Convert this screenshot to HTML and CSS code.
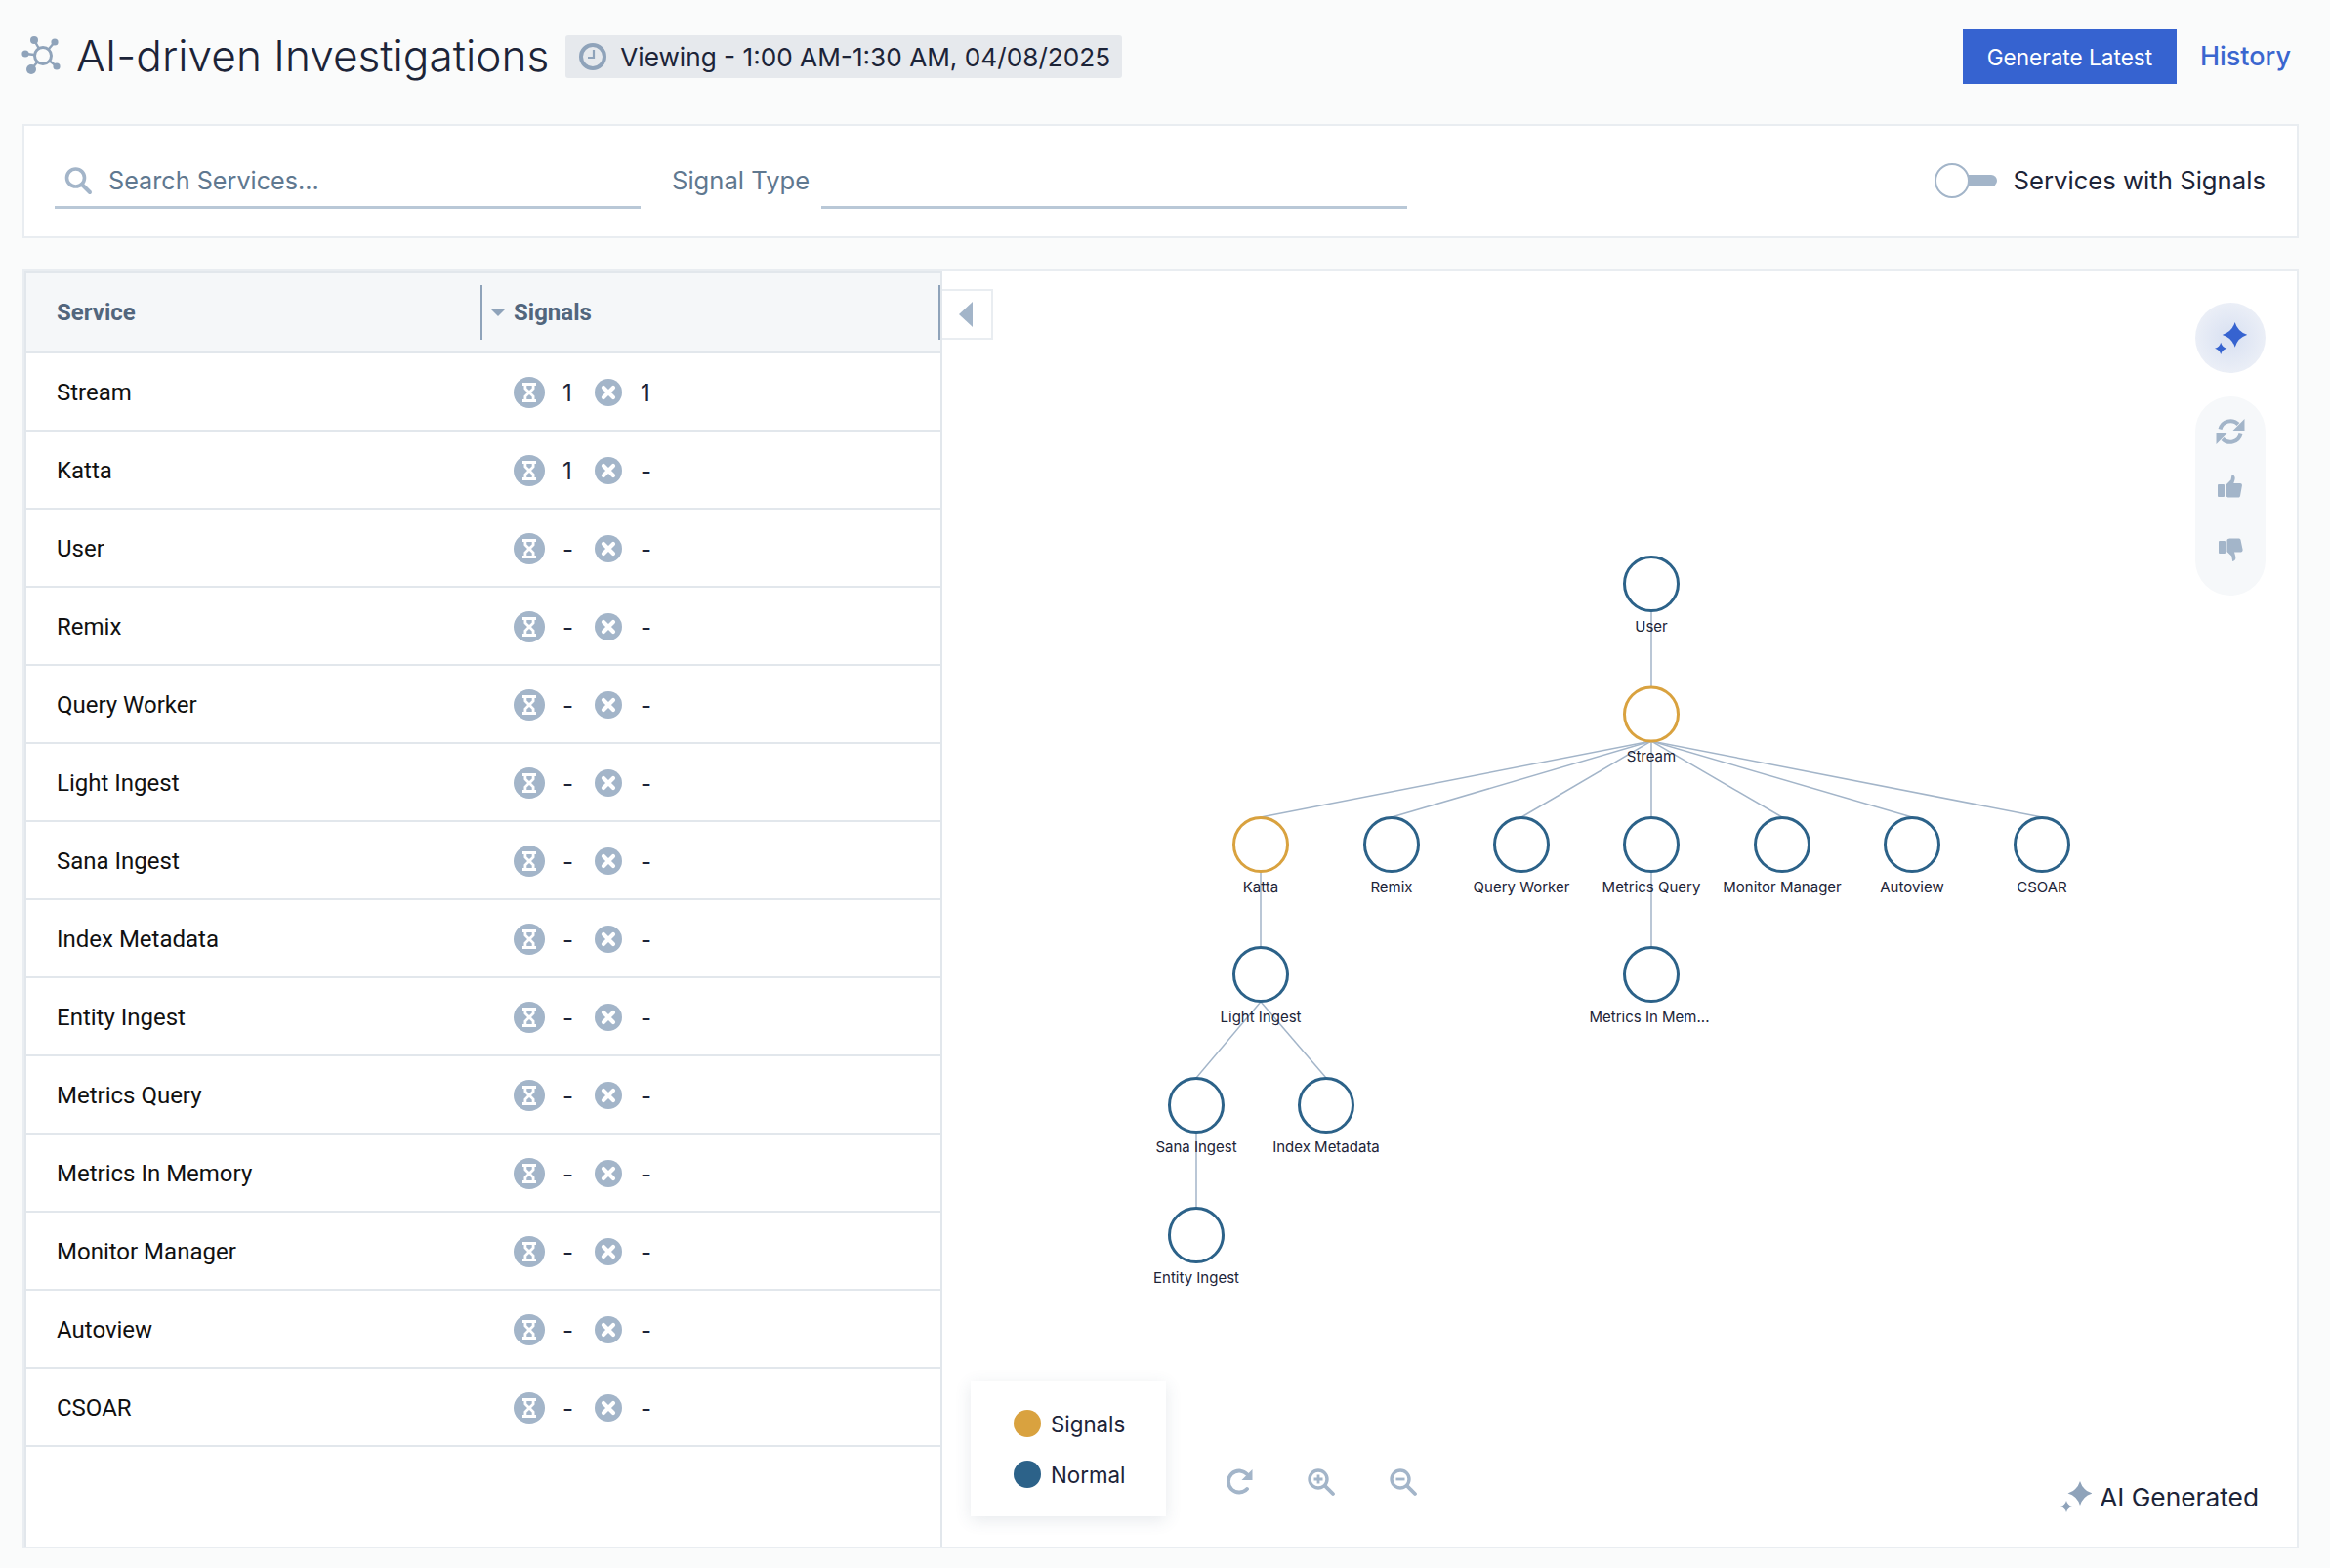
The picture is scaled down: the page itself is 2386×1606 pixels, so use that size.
FILE: index.html
```html
<!DOCTYPE html>
<html lang="en">

<head>
    <meta charset="UTF-8">
    <meta name="viewport" content="width=device-width, initial-scale=1.0">
    <title>AI-driven Investigations</title>
    <link rel="stylesheet" href="styles.css">
</head>

<body>
    <svg class="defs" width="0" height="0">
        <defs>
            <symbol id="i-wait" viewBox="0 0 32 32">
                <circle cx="16" cy="16" r="16" fill="#a3b5c9" />
                <path d="M9 6h14v3h-1.500v3.500L18 16l3.500 3.500V23H23v3H9v-3h1.500v-3.500L14 16l-3.500-3.500V9H9z" fill="#fff" />
                <path d="M13.300 9h5.400v2.400L16 14l-2.700-2.600zM16 18l2.700 2.600V23h-5.400v-2.400z" fill="#a3b5c9" />
            </symbol>
            <symbol id="i-fail" viewBox="0 0 28 28">
                <circle cx="14" cy="14" r="14" fill="#a3b5c9" />
                <path d="M9 9l10 10M19 9L9 19" stroke="#fff" stroke-width="4.200" stroke-linecap="round" />
            </symbol>
            <symbol id="i-spark" viewBox="0 0 32 32">
                <path d="M20 0Q22.800 9.700 32.500 12.500 22.800 15.300 20 25 17.200 15.300 7.500 12.500 17.200 9.700 20 0z" />
                <path d="M6 20Q7.300 24.700 12 26 7.300 27.300 6 32 4.700 27.300 0 26 4.700 24.700 6 20z" />
            </symbol>
        </defs>
    </svg>

    <div class="page">
        <header class="topbar">
            <svg class="logo" viewBox="0 0 40 40" width="40" height="40">
                <g stroke="#8fa3ba" stroke-width="2.400">
                    <path d="M13 4l9 16M34 6L22 20M4 18l18 2M10 34l12-14M36 31L22 20" />
                </g>
                <circle cx="22" cy="20" r="8.500" fill="#fafbfb" stroke="#8fa3ba" stroke-width="3" />
                <g fill="#8fa3ba">
                    <circle cx="13" cy="4" r="4" />
                    <circle cx="34" cy="6" r="3.600" />
                    <circle cx="4" cy="18" r="3.600" />
                    <circle cx="10" cy="34" r="5" />
                    <circle cx="36" cy="31" r="3.600" />
                </g>
            </svg>
            <h1 class="title">AI-driven Investigations</h1>
            <div class="viewing">
                <svg viewBox="0 0 28 28" width="28" height="28">
                    <circle cx="14" cy="14" r="12" fill="none" stroke="#8fa3ba" stroke-width="4" />
                    <path d="M15 7v8H9" fill="none" stroke="#8fa3ba" stroke-width="2.200" />
                </svg>
                <span>Viewing - 1:00 AM-1:30 AM, 04/08/2025</span>
            </div>
            <button class="btn-generate">Generate Latest</button>
            <a class="history">History</a>
        </header>

        <section class="filters">
            <div class="search">
                <svg viewBox="0 0 30 30" width="30" height="30">
                    <circle cx="12.500" cy="12" r="9" fill="none" stroke="#a3b5c9" stroke-width="3.600" />
                    <path d="M19 19l8 8" stroke="#a3b5c9" stroke-width="4" stroke-linecap="round" />
                </svg>
                <span>Search Services...</span>
            </div>
            <div class="signal-type">
                <span class="signal-label">Signal Type</span>
                <div class="signal-input"></div>
            </div>
            <div class="toggle">
                <div class="toggle-track"><div class="toggle-knob"></div></div>
                <span>Services with Signals</span>
            </div>
        </section>

        <main class="main">
            <div class="service-table">
                <div class="row head">
                    <div class="col-service">Service</div>
                    <div class="col-signals"><i class="sort"></i>Signals</div>
                </div>
                <div class="row">
                    <div class="col-service">Stream</div>
                    <div class="col-signals"><svg class="ic-wait"><use href="#i-wait" /></svg><span class="num">1</span><svg class="ic-fail"><use href="#i-fail" /></svg><span class="num">1</span></div>
                </div>
                <div class="row">
                    <div class="col-service">Katta</div>
                    <div class="col-signals"><svg class="ic-wait"><use href="#i-wait" /></svg><span class="num">1</span><svg class="ic-fail"><use href="#i-fail" /></svg><span class="num">-</span></div>
                </div>
                <div class="row">
                    <div class="col-service">User</div>
                    <div class="col-signals"><svg class="ic-wait"><use href="#i-wait" /></svg><span class="num">-</span><svg class="ic-fail"><use href="#i-fail" /></svg><span class="num">-</span></div>
                </div>
                <div class="row">
                    <div class="col-service">Remix</div>
                    <div class="col-signals"><svg class="ic-wait"><use href="#i-wait" /></svg><span class="num">-</span><svg class="ic-fail"><use href="#i-fail" /></svg><span class="num">-</span></div>
                </div>
                <div class="row">
                    <div class="col-service">Query Worker</div>
                    <div class="col-signals"><svg class="ic-wait"><use href="#i-wait" /></svg><span class="num">-</span><svg class="ic-fail"><use href="#i-fail" /></svg><span class="num">-</span></div>
                </div>
                <div class="row">
                    <div class="col-service">Light Ingest</div>
                    <div class="col-signals"><svg class="ic-wait"><use href="#i-wait" /></svg><span class="num">-</span><svg class="ic-fail"><use href="#i-fail" /></svg><span class="num">-</span></div>
                </div>
                <div class="row">
                    <div class="col-service">Sana Ingest</div>
                    <div class="col-signals"><svg class="ic-wait"><use href="#i-wait" /></svg><span class="num">-</span><svg class="ic-fail"><use href="#i-fail" /></svg><span class="num">-</span></div>
                </div>
                <div class="row">
                    <div class="col-service">Index Metadata</div>
                    <div class="col-signals"><svg class="ic-wait"><use href="#i-wait" /></svg><span class="num">-</span><svg class="ic-fail"><use href="#i-fail" /></svg><span class="num">-</span></div>
                </div>
                <div class="row">
                    <div class="col-service">Entity Ingest</div>
                    <div class="col-signals"><svg class="ic-wait"><use href="#i-wait" /></svg><span class="num">-</span><svg class="ic-fail"><use href="#i-fail" /></svg><span class="num">-</span></div>
                </div>
                <div class="row">
                    <div class="col-service">Metrics Query</div>
                    <div class="col-signals"><svg class="ic-wait"><use href="#i-wait" /></svg><span class="num">-</span><svg class="ic-fail"><use href="#i-fail" /></svg><span class="num">-</span></div>
                </div>
                <div class="row">
                    <div class="col-service">Metrics In Memory</div>
                    <div class="col-signals"><svg class="ic-wait"><use href="#i-wait" /></svg><span class="num">-</span><svg class="ic-fail"><use href="#i-fail" /></svg><span class="num">-</span></div>
                </div>
                <div class="row">
                    <div class="col-service">Monitor Manager</div>
                    <div class="col-signals"><svg class="ic-wait"><use href="#i-wait" /></svg><span class="num">-</span><svg class="ic-fail"><use href="#i-fail" /></svg><span class="num">-</span></div>
                </div>
                <div class="row">
                    <div class="col-service">Autoview</div>
                    <div class="col-signals"><svg class="ic-wait"><use href="#i-wait" /></svg><span class="num">-</span><svg class="ic-fail"><use href="#i-fail" /></svg><span class="num">-</span></div>
                </div>
                <div class="row">
                    <div class="col-service">CSOAR</div>
                    <div class="col-signals"><svg class="ic-wait"><use href="#i-wait" /></svg><span class="num">-</span><svg class="ic-fail"><use href="#i-fail" /></svg><span class="num">-</span></div>
                </div>
            </div>

            <div class="graph-pane">
                <!-- viewBox keeps page coords so the tree lines up with the screenshot -->
                <svg class="graph" viewBox="965 277 1387 1306">
                    <g class="edges">
                        <path d="M1691 625V703" />
                        <path d="M1691 758L1291 836" />
                        <path d="M1691 758L1425 836" />
                        <path d="M1691 758L1558 836" />
                        <path d="M1691 758V836" />
                        <path d="M1691 758L1825 836" />
                        <path d="M1691 758L1958 836" />
                        <path d="M1691 758L2091 836" />
                        <path d="M1291 892V969" />
                        <path d="M1691 892V969" />
                        <path d="M1291 1025L1225 1103" />
                        <path d="M1291 1025L1358 1103" />
                        <path d="M1225 1159V1236" />
                    </g>
                    <g class="nodes">
                        <circle cx="1691" cy="597" r="27.500" />
                        <circle class="hot" cx="1691" cy="730.500" r="27.500" />
                        <circle class="hot" cx="1291" cy="864" r="27.500" />
                        <circle cx="1425" cy="864" r="27.500" />
                        <circle cx="1558" cy="864" r="27.500" />
                        <circle cx="1691" cy="864" r="27.500" />
                        <circle cx="1825" cy="864" r="27.500" />
                        <circle cx="1958" cy="864" r="27.500" />
                        <circle cx="2091" cy="864" r="27.500" />
                        <circle cx="1291" cy="997" r="27.500" />
                        <circle cx="1691" cy="997" r="27.500" />
                        <circle cx="1225" cy="1131" r="27.500" />
                        <circle cx="1358" cy="1131" r="27.500" />
                        <circle cx="1225" cy="1264" r="27.500" />
                    </g>
                    <g class="labels">
                        <text x="1691" y="646">User</text>
                        <text x="1691" y="779">Stream</text>
                        <text x="1291" y="913">Katta</text>
                        <text x="1425" y="913">Remix</text>
                        <text x="1558" y="913">Query Worker</text>
                        <text x="1691" y="913">Metrics Query</text>
                        <text x="1825" y="913">Monitor Manager</text>
                        <text x="1958" y="913">Autoview</text>
                        <text x="2091" y="913">CSOAR</text>
                        <text x="1291" y="1046">Light Ingest</text>
                        <text x="1689" y="1046">Metrics In Mem...</text>
                        <text x="1225" y="1179">Sana Ingest</text>
                        <text x="1358" y="1179">Index Metadata</text>
                        <text x="1225" y="1313">Entity Ingest</text>
                    </g>
                </svg>

                <button class="collapse"><i class="collapse-arrow"></i></button>

                <div class="ai-tools">
                    <div class="ai-spark">
                        <svg width="33" height="33" fill="#3663d0"><use href="#i-spark" /></svg>
                    </div>
                    <div class="ai-actions">
                        <svg viewBox="0 0 30 30" width="30" height="30">
                            <path d="M4.500 12.500a11 11 0 0 1 18.500-5M25.500 17.500a11 11 0 0 1-18.500 5" fill="none" stroke="#a3b5c9" stroke-width="4" />
                            <path d="M29.500 2v12H17.500zM.5 28V16h12z" fill="#a3b5c9" />
                        </svg>
                        <svg class="act-up" viewBox="0 0 28 28" width="28" height="28" fill="#a3b5c9">
                            <rect x="1" y="11" width="7" height="13" rx="1" />
                            <path d="M9.500 11.500l5-5 1-5c2.800 0 3.800 2.200 2.800 5.500l-1 3h6.700c1.500 0 2.300 1.500 1.800 3l-1.800 10c-.3 1-1 1.500-2 1.500H12.500c-1.500 0-3-.7-3-2z" />
                        </svg>
                        <svg class="act-down" viewBox="0 0 28 28" width="28" height="28" fill="#a3b5c9">
                            <rect x="2" y="4" width="7" height="13" rx="1" />
                            <path d="M10.500 3.500c0-1.300 1.500-2 3-2h9c1 0 1.700.5 2 1.500l2 9.500c.4 1.500-.3 3-1.800 3h-6.700l1 3.500c1 3.300 0 5.500-2.800 6l-1-5.500-4.700-4.500z" />
                        </svg>
                    </div>
                </div>

                <div class="legend">
                    <div class="legend-item"><i class="dot dot-signal"></i>Signals</div>
                    <div class="legend-item"><i class="dot dot-normal"></i>Normal</div>
                </div>

                <div class="graph-tools">
                    <svg viewBox="0 0 30 30" width="30" height="30">
                        <path d="M23 22a11 11 0 1 1 0-15" fill="none" stroke="#a3b5c9" stroke-width="3.800" stroke-linecap="round" />
                        <path d="M28.500 2v11H17.500z" fill="#a3b5c9" />
                    </svg>
                    <svg viewBox="0 0 30 30" width="30" height="30">
                        <circle cx="12" cy="12" r="9" fill="none" stroke="#a3b5c9" stroke-width="3.400" />
                        <path d="M19 19l8 8" stroke="#a3b5c9" stroke-width="3.800" stroke-linecap="round" />
                        <path d="M7.500 12h9M12 7.500v9" stroke="#a3b5c9" stroke-width="2.800" />
                    </svg>
                    <svg viewBox="0 0 30 30" width="30" height="30">
                        <circle cx="12" cy="12" r="9" fill="none" stroke="#a3b5c9" stroke-width="3.400" />
                        <path d="M19 19l8 8" stroke="#a3b5c9" stroke-width="3.800" stroke-linecap="round" />
                        <path d="M7.500 12h9" stroke="#a3b5c9" stroke-width="2.800" />
                    </svg>
                </div>

                <div class="ai-generated">
                    <svg width="32" height="32" fill="#8fa3ba"><use href="#i-spark" /></svg>
                    <span>AI Generated</span>
                </div>
            </div>
        </main>
    </div>
</body>

</html>
```

FILE: styles.css
```css
* {
    box-sizing: border-box;
}

body {
    font-family: Inter, "Noto Sans", sans-serif;
    background-color: #fafbfb;
    color: #1c2438;
    margin: 0;
}

.defs {
    position: absolute;
}

.page {
    padding: 30px 32px 0 23px;
}

.topbar {
    display: flex;
    align-items: center;
    height: 56px;
}

.logo {
    margin: -2px 0 0 -1px;
    flex: none;
}

.title {
    font-size: 44.200px;
    font-weight: 300;
    margin: -2px 0 0 16px;
    white-space: nowrap;
}

.viewing {
    display: flex;
    align-items: center;
    gap: 14px;
    height: 44px;
    margin: 0 0 0 17px;
    padding: 0 12px 0 14px;
    background-color: #e6e9ed;
    border-radius: 3px;
    font-size: 26.200px;
    font-weight: 400;
    white-space: nowrap;
}

.btn-generate {
    margin-left: auto;
    width: 219px;
    height: 56px;
    border: none;
    background-color: #3663d0;
    color: white;
    font-family: inherit;
    font-size: 22.600px;
}

.history {
    margin: -2px 8px 0 24px;
    color: #3a66cf;
    font-size: 27px;
    font-weight: 500;
}

.filters {
    display: flex;
    align-items: center;
    height: 117px;
    margin-top: 41px;
    padding: 0 32px 0 31px;
    background-color: white;
    border: 2px solid #e9edf1;
    font-size: 25.600px;
}

.search {
    display: flex;
    align-items: center;
    gap: 16px;
    width: 600px;
    height: 54px;
    margin-top: 2px;
    padding: 0 0 1px 9px;
    border-bottom: 3px solid #b9c8d7;
    color: #5f7890;
    font-size: 25.200px;
}

.signal-type {
    display: flex;
    margin: 2px 0 0 32px;
    height: 54px;
}

.signal-label {
    width: 153px;
    padding-top: 9px;
    color: #5f7890;
}

.signal-input {
    width: 600px;
    border-bottom: 3px solid #b9c8d7;
}

.toggle {
    display: flex;
    align-items: center;
    gap: 16px;
    margin: -2px 0 0 auto;
    font-size: 25.700px;
}

.toggle-track {
    position: relative;
    width: 64px;
    height: 12px;
    background-color: #a3b5c9;
    border-radius: 6px;
}

.toggle-knob {
    position: absolute;
    left: 0;
    top: -12px;
    width: 36px;
    height: 36px;
    background-color: white;
    border: 2px solid #a3b5c9;
    border-radius: 50%;
}

.main {
    display: flex;
    height: 1310px;
    margin-top: 32px;
    background-color: white;
    border: 2px solid #e9edf1;
}

.service-table {
    width: 940px;
    flex: none;
    border-right: 2px solid #e2e7ec;
    border-left: 2px solid #e2e7ec;
    border-top: 2px solid #e2e7ec;
    font-family: Roboto, sans-serif;
    font-size: 24px;
    color: #111;
}

.row {
    display: flex;
    align-items: center;
    height: 80px;
    padding-top: 2px;
    border-bottom: 2px solid #e2e7ec;
}

.row.head {
    position: relative;
    height: 82px;
    padding-top: 0;
    background-color: #f5f7f9;
    color: #52667d;
    font-weight: 700;
}

.col-service {
    width: 499px;
    padding-left: 31px;
}

.col-signals {
    display: flex;
    align-items: center;
}

.head .col-service {
    position: relative;
}

.head .col-service::after {
    content: "";
    position: absolute;
    right: 32px;
    top: -14px;
    width: 2px;
    height: 56px;
    background-color: #8fa3ba;
}

.head::after {
    content: "";
    position: absolute;
    right: 0;
    top: 12px;
    width: 2px;
    height: 56px;
    background-color: #8fa3ba;
}

.sort {
    position: absolute;
    margin-left: -24px;
    border-left: 8px solid transparent;
    border-right: 8px solid transparent;
    border-top: 8px solid #8fa3ba;
}

.ic-wait {
    width: 32px;
    height: 32px;
}

.ic-fail {
    width: 28px;
    height: 28px;
}

.num {
    width: 51px;
    padding-left: 18px;
    font-family: Inter, sans-serif;
    color: #1c2438;
}

.ic-fail + .num {
    padding-left: 19px;
}

.graph-pane {
    position: relative;
    flex: 1;
}

.graph {
    display: block;
    width: 100%;
    height: 100%;
}

.edges path {
    fill: none;
    stroke: #a3b5c9;
    stroke-width: 1.500;
}

.nodes circle {
    fill: white;
    stroke: #2c6289;
    stroke-width: 3;
}

.nodes .hot {
    stroke: #d9a23f;
}

.labels text {
    font-family: Inter, sans-serif;
    font-size: 15px;
    fill: #1c2438;
    text-anchor: middle;
}

.collapse {
    position: absolute;
    left: 0;
    top: 18px;
    width: 52px;
    height: 52px;
    padding: 0;
    background-color: white;
    border: 2px solid #e9edf1;
    border-left: none;
}

.collapse-arrow {
    display: block;
    width: 0;
    margin-left: 17px;
    border-top: 13px solid transparent;
    border-bottom: 13px solid transparent;
    border-right: 14px solid #a3b5c9;
}

.ai-tools {
    position: absolute;
    right: 32px;
    top: 32px;
    width: 72px;
}

.ai-spark {
    display: flex;
    align-items: center;
    justify-content: center;
    height: 72px;
    border-radius: 50%;
    background: radial-gradient(circle, #dde4f3 20%, #f3f5f9 100%);
}

.ai-actions {
    display: flex;
    flex-direction: column;
    align-items: center;
    height: 204px;
    margin-top: 24px;
    padding-top: 21px;
    border-radius: 36px;
    background-color: #f6f8fa;
}

.act-up {
    margin-top: 28px;
}

.act-down {
    margin-top: 37px;
}

.legend {
    position: absolute;
    left: 29px;
    bottom: 31px;
    width: 200px;
    height: 139px;
    padding: 27px 0 0 44px;
    background-color: white;
    box-shadow: 0 4px 16px rgba(60, 80, 110, 0.12);
    font-size: 22.300px;
}

.legend-item {
    display: flex;
    align-items: center;
    gap: 10px;
    height: 34px;
    margin-bottom: 18px;
}

.dot {
    width: 28px;
    height: 28px;
    border-radius: 50%;
}

.dot-signal {
    background-color: #d9a23f;
}

.dot-normal {
    background-color: #2c6289;
}

.graph-tools {
    position: absolute;
    left: 289px;
    bottom: 51px;
    display: flex;
    gap: 54px;
}

.ai-generated {
    position: absolute;
    right: 39px;
    bottom: 35px;
    display: flex;
    align-items: center;
    gap: 8px;
    font-size: 26.300px;
}
```
